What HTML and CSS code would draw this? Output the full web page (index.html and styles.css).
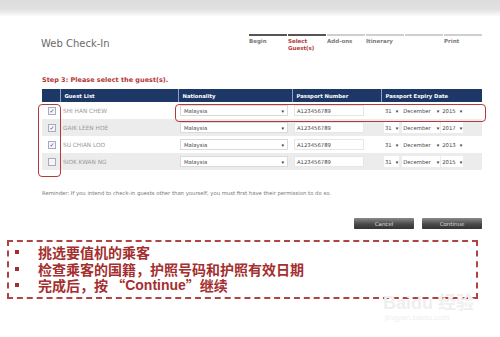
FILE: index.html
```html
<!DOCTYPE html>
<html lang="en">
<head>
  <meta charset="UTF-8" />
  <title>Web Check-In</title>
  <link rel="stylesheet" href="styles.css">
</head>
<body>
  <div class="topbar"></div>
  <div class="page">
    <div class="head">
      <h1>Web Check-In</h1>
      <div class="steps">
        <div class="step done">Begin</div>
        <div class="step done current">Select<br>Guest(s)</div>
        <div class="step">Add-ons</div>
        <div class="step">Itinerary</div>
        <div class="step"></div>
        <div class="step">Print</div>
      </div>
    </div>

    <div class="step-title">Step 3: Please select the guest(s).</div>

    <div class="grid-wrap">
      <table class="guests">
        <tr>
          <th class="c-chk"></th>
          <th class="c-name">Guest List</th>
          <th class="c-nat">Nationality</th>
          <th class="c-pp">Passport Number</th>
          <th class="c-exp">Passport Expiry Date</th>
        </tr>
        <tr>
          <td><span class="chk on">✓</span></td>
          <td class="name">SHI HAN CHEW</td>
          <td><span class="sel">Malaysia<i>▾</i></span></td>
          <td><span class="inp">A123456789</span></td>
          <td><span class="mini">31<i>▾</i></span><span class="mini m">December<i>▾</i></span><span class="mini">2015<i>▾</i></span></td>
        </tr>
        <tr class="alt">
          <td><span class="chk on">✓</span></td>
          <td class="name">GAIK LEEN HOE</td>
          <td><span class="sel">Malaysia<i>▾</i></span></td>
          <td><span class="inp">A123456789</span></td>
          <td><span class="mini">31<i>▾</i></span><span class="mini m">December<i>▾</i></span><span class="mini">2017<i>▾</i></span></td>
        </tr>
        <tr>
          <td><span class="chk on">✓</span></td>
          <td class="name">SU CHIAN LOO</td>
          <td><span class="sel">Malaysia<i>▾</i></span></td>
          <td><span class="inp">A123456789</span></td>
          <td><span class="mini">31<i>▾</i></span><span class="mini m">December<i>▾</i></span><span class="mini">2013<i>▾</i></span></td>
        </tr>
        <tr class="alt">
          <td><span class="chk"></span></td>
          <td class="name">SIOK KWAN NG</td>
          <td><span class="sel">Malaysia<i>▾</i></span></td>
          <td><span class="inp">A123456789</span></td>
          <td><span class="mini">31<i>▾</i></span><span class="mini m">December<i>▾</i></span><span class="mini">2015<i>▾</i></span></td>
        </tr>
      </table>
      <div class="ring ring-chk"></div>
      <div class="ring ring-row"></div>
    </div>

    <p class="reminder">Reminder: If you intend to check-in guests other than yourself, you must first have their permission to do so.</p>

    <div class="actions">
      <button>Cancel</button>
      <button>Continue</button>
    </div>
  </div>

  <ul class="note">
    <li>挑选要值机的乘客</li>
    <li>检查乘客的国籍，护照号码和护照有效日期</li>
    <li>完成后，按 “<b>Continue</b>”继续</li>
  </ul>

  <div class="watermark">
    <div class="wm-logo">Bai<span>d</span>u 经验</div>
    <div class="wm-url">jingyan.baidu.com</div>
  </div>
</body>
</html>
```

FILE: styles.css
```css
body {
  margin: 0;
  width: 500px;
  height: 337px;
  overflow: hidden;
  background: #fff;
  font-family: 'DejaVu Sans', sans-serif;
  position: relative;
}
.topbar {
  height: 16px;
  background: linear-gradient(#dcdcdc, #e2e2e2 60%, #fbfbfb);
}
.page {
  padding: 0 18px 0 42px;
}
.head {
  display: flex;
  justify-content: space-between;
  margin-top: 18px;
}
h1 {
  margin: 4px 0 0 -1px;
  font-size: 10px;
  line-height: 12px;
  font-weight: normal;
  color: #6a6a6a;
}
.steps {
  display: flex;
  gap: 1px;
}
.step {
  width: 38px;
  border-top: 2px solid #cfcfcf;
  padding-top: 2px;
  font-size: 5.5px;
  line-height: 7px;
  font-weight: bold;
  color: #7a7a7a;
  height: 16px;
}
.step.done {
  border-top-color: #555;
}
.step.current {
  color: #b53a3a;
}
.step-title {
  margin-top: 22px;
  font-size: 6.5px;
  line-height: 9px;
  font-weight: bold;
  color: #b53434;
}
.grid-wrap {
  position: relative;
  margin-top: 4px;
}
.guests {
  width: 440px;
  border-collapse: collapse;
  table-layout: fixed;
}
.guests th, .guests td {
  box-sizing: border-box;
}
.guests th {
  background: #1d3867;
  color: #fff;
  height: 13px;
  padding: 0 0 0 4px;
  font-size: 5.3px;
  text-align: left;
  border-right: 1px solid #8fa3c4;
}
.guests th:last-child {
  border-right: none;
}
.c-chk { width: 18px; }
.c-name { width: 118px; }
.c-nat { width: 114px; }
.c-pp { width: 89px; }
.c-exp { width: 101px; }
.guests td {
  height: 17px;
  padding: 0 0 0 2px;
  font-size: 5.3px;
  color: #444;
  white-space: nowrap;
  overflow: hidden;
}
.guests tr.alt td {
  background: #ececec;
}
.guests td.name {
  color: #9a9a9a;
  font-size: 5.8px;
  padding-left: 3px;
}
.chk {
  display: inline-block;
  width: 6px;
  height: 6px;
  margin-left: 4px;
  border: 1px solid #aab;
  background: #f6f6fa;
  color: #2d4f9a;
  font-size: 6px;
  line-height: 6px;
  text-align: center;
  vertical-align: middle;
}
.sel, .inp, .mini {
  display: inline-flex;
  align-items: center;
  height: 11px;
  background: #fff;
  vertical-align: middle;
  box-sizing: border-box;
}
.sel {
  width: 108px;
  padding: 0 3px;
  border: 1px solid #dadada;
  justify-content: space-between;
}
.inp {
  width: 70px;
  padding: 0 2px;
  border: 1px solid #e6e6e6;
}
.mini {
  padding: 0 1px;
  margin-left: 1px;
  gap: 4px;
}
.mini.m {
  margin-left: 3px;
  gap: 6px;
}
.mini i, .sel i {
  font-style: normal;
  font-size: 5px;
  color: #333;
}
.ring {
  position: absolute;
  border: 1.5px solid #b43a3a;
  border-radius: 4px;
}
.ring-chk {
  left: -4px;
  top: 15px;
  width: 21px;
  height: 71px;
}
.ring-row {
  left: 133px;
  top: 15px;
  width: 309px;
  height: 16px;
}
.reminder {
  margin: 19px 0 0;
  font-size: 5.3px;
  line-height: 8px;
  color: #777;
}
.actions {
  display: flex;
  justify-content: flex-end;
  gap: 8px;
  margin-top: 21px;
}
.actions button {
  width: 60px;
  height: 11px;
  padding: 0;
  border: none;
  border-radius: 1px;
  background: linear-gradient(#8a8a8a, #4a4a4a 55%, #333);
  color: #ddd;
  font-family: 'DejaVu Sans', sans-serif;
  font-size: 5.5px;
}
.note {
  list-style: none;
  margin: 11px 0 0 7px;
  width: 467px;
  padding: 2px 0 3px;
  border: 2px dashed #b04444;
  font-family: 'Noto Sans CJK SC', sans-serif;
  font-size: 14px;
  line-height: 16.5px;
  font-weight: bold;
  color: #a42f2f;
}
.note li {
  display: flex;
  align-items: center;
}
.note li::before {
  content: "";
  width: 4px;
  height: 4px;
  background: #a42f2f;
  margin: 0 19px 0 6px;
}
.note b {
  font-family: 'Liberation Sans', sans-serif;
}
.watermark {
  position: absolute;
  left: 383px;
  top: 293px;
  color: #efefef;
  font-family: 'Liberation Sans', 'Noto Sans CJK SC', sans-serif;
}
.wm-logo {
  font-size: 18px;
  font-weight: bold;
  line-height: 20px;
}
.wm-url {
  font-size: 8px;
  margin-left: 2px;
}
```
